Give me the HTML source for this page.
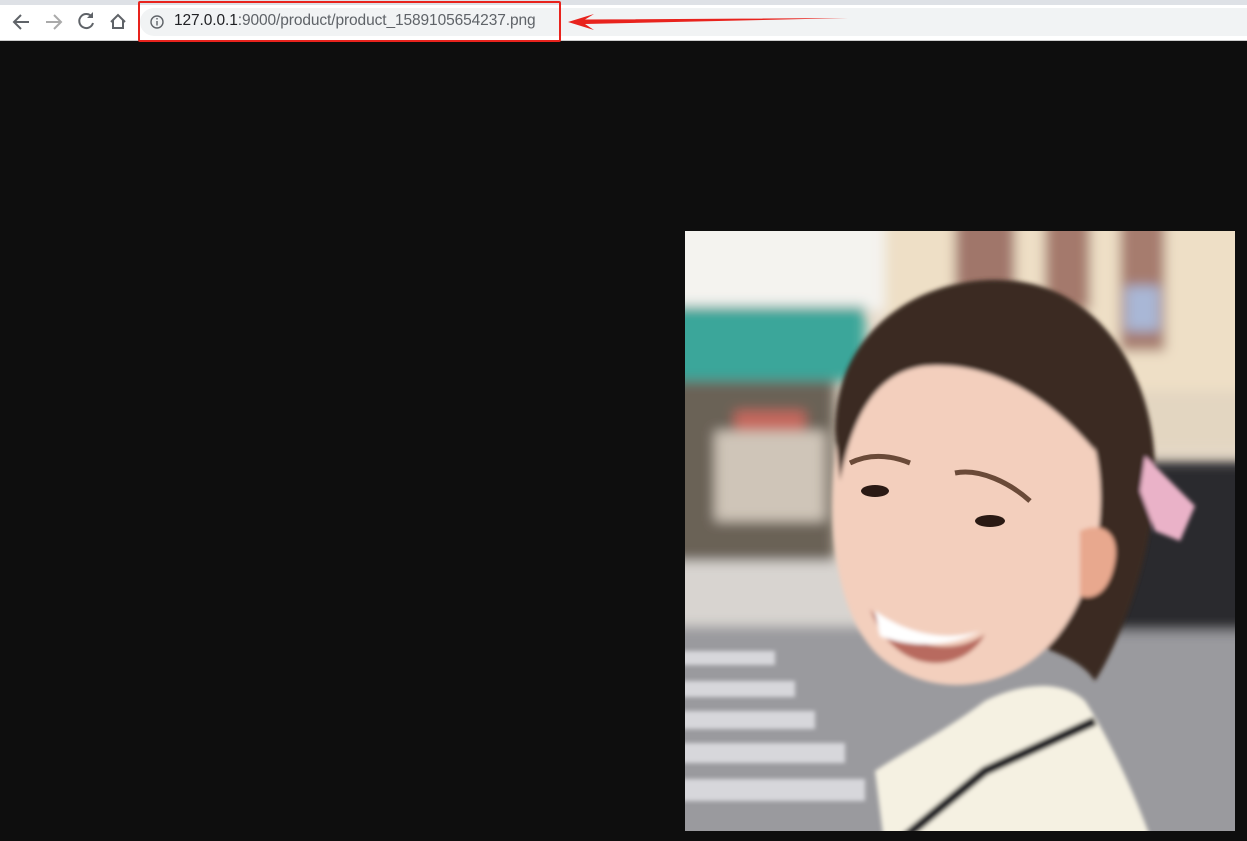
<!DOCTYPE html>
<html><head><meta charset="utf-8"><style>
html,body{margin:0;padding:0;width:1247px;height:841px;overflow:hidden;background:#0e0e0e;font-family:"Liberation Sans",sans-serif}
#top{position:absolute;left:0;top:0;width:1247px;height:5px;background:#dee1e6}
#bar{position:absolute;left:0;top:5px;width:1247px;height:35px;background:#fff;border-bottom:1px solid #ccc}
#addr{position:absolute;left:140px;top:8px;width:1107px;height:28px;background:#f1f3f4;border-radius:14px 0 0 14px}
#url{position:absolute;left:174px;top:12px;font-size:15.5px;color:#202124;letter-spacing:-0.1px}
#url span{color:#5f6368}
#red{position:absolute;left:138px;top:1px;width:419px;height:37px;border:2px solid #e8231d;border-radius:2px}
</style></head><body>
<div id="top"></div><div id="bar"></div><div id="addr"></div>
<svg style="position:absolute;left:0;top:0" width="1247" height="42">
<g fill="none" stroke="#5f6368" stroke-width="2">
<path d="M29 22H15M21 15l-7 7 7 7"/>
<path d="M46 22h14M54 15l7 7-7 7" stroke="#aaa"/>
<path d="M92 17a7 7 0 1 0 1 6"/>
<path d="M111 22l7-7 7 7M113 20v8h10v-8"/>
<circle cx="157" cy="22" r="6" stroke-width="1.4"/>
</g>
<path d="M93 12v6h-6z" fill="#5f6368"/>
<rect x="156.3" y="21" width="1.4" height="4.5" fill="#5f6368"/><rect x="156.3" y="18" width="1.4" height="1.5" fill="#5f6368"/>
<path d="M848 18L585 19.5 594 14 568 22 594 30 585 24z" fill="#e8231d"/>
</svg>
<div id="url">127.0.0.1<span>:9000/product/product_1589105654237.png</span></div>
<div id="red"></div>
<svg style="position:absolute;left:685px;top:231px" width="550" height="600" viewBox="0 0 550 600">
<defs>
<filter id="b" x="-20%" y="-20%" width="140%" height="140%"><feGaussianBlur stdDeviation="6"/></filter>
<filter id="b2"><feGaussianBlur stdDeviation="2"/></filter>
<clipPath id="c"><rect width="550" height="600"/></clipPath>
</defs>
<g clip-path="url(#c)">
<rect width="550" height="600" fill="#e8dccd"/>
<g filter="url(#b)">
<rect x="-30" y="-30" width="230" height="110" fill="#f4f3ef"/>
<rect x="200" y="-30" width="380" height="210" fill="#eedfc6"/>
<rect x="270" y="-30" width="60" height="90" fill="#a0766a"/>
<rect x="360" y="-30" width="45" height="110" fill="#a4796c"/>
<rect x="435" y="-30" width="45" height="150" fill="#a67c6e"/>
<rect x="440" y="55" width="35" height="45" fill="#a9b7d6"/>
<rect x="-30" y="75" width="210" height="75" fill="#3aa69a"/>
<rect x="-30" y="150" width="180" height="180" fill="#6b6257"/>
<rect x="30" y="200" width="110" height="90" fill="#cfc5b8"/>
<rect x="50" y="180" width="70" height="20" fill="#c6675d"/>
<rect x="-30" y="330" width="230" height="70" fill="#d8d4d0"/>
<rect x="-30" y="395" width="610" height="235" fill="#9a9a9e"/>
<rect x="420" y="230" width="160" height="170" fill="#2a2a2e"/>
<rect x="440" y="160" width="140" height="60" fill="#e3d6c1"/>
</g>
<g fill="#d7d7db" filter="url(#b2)">
<rect x="-10" y="420" width="100" height="14"/><rect x="-10" y="450" width="120" height="16"/>
<rect x="-10" y="480" width="140" height="18"/><rect x="-10" y="512" width="170" height="20"/>
<rect x="-10" y="548" width="190" height="22"/>
</g>
<g filter="url(#b2)">
<path d="M150 200C150 90 250 40 330 50 420 60 470 150 470 240 470 330 430 420 410 450 390 420 350 420 330 400Z" fill="#3b2a21"/>
<path d="M150 230C150 160 210 110 290 115 360 120 410 170 415 250 420 330 390 410 330 440 290 460 240 460 200 430 160 400 140 320 150 230Z" fill="#f3cfbd"/>
<path d="M150 200C170 140 240 100 320 115 370 130 405 170 410 220 360 160 300 130 240 135 200 140 170 170 155 250Z" fill="#3b2a21"/>
<path d="M395 300c20-10 40 0 35 30s-20 40-35 35z" fill="#e8a88e"/>
<path d="M460 225l20 20 30 30-15 35-25 -10-15-40z" fill="#eab2c8"/>
<path d="M185 378c30 35 80 50 115 25-20 40-90 45-115-25z" fill="#b86a5e"/>
<path d="M190 380c35 25 75 30 105 20-20 12-60 20-100 5z" fill="#fff"/>
<path d="M200 620L190 540C220 520 260 500 300 470 340 450 380 450 400 470 420 500 450 560 470 620Z" fill="#f5f1e2"/>
<path d="M215 610L300 540 410 490" stroke="#1a1a22" stroke-width="9" fill="none"/>
</g>
<g fill="#2a1a14"><ellipse cx="190" cy="260" rx="14" ry="6"/><ellipse cx="305" cy="290" rx="15" ry="6"/></g>
<g stroke="#6a4a38" stroke-width="5" fill="none"><path d="M165 232c20-10 40-8 60 0"/><path d="M270 242c25-5 55 10 75 28"/></g>
</g>
</svg>
</body></html>
